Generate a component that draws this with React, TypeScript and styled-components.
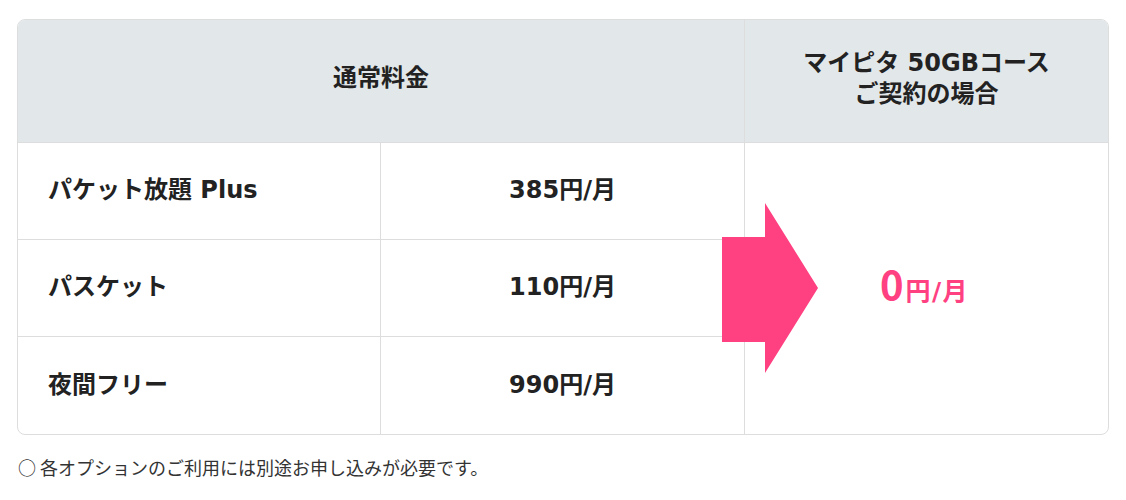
import React from "react";
import styled, { createGlobalStyle } from "styled-components";

const Global = createGlobalStyle`
  body {
    margin: 0;
    background: #fff;
    font-family: "DejaVu Sans", "Noto Sans CJK JP", sans-serif;
    color: #222;
  }
`;

const Page = styled.div`
  padding: 19px 17px 0 17px;
`;

const TableWrap = styled.div`
  position: relative;
`;

const Table = styled.div`
  display: grid;
  grid-template-columns: 363px 364px 1fr;
  grid-template-rows: 123px repeat(3, 97px);
  border: 1px solid #dddddd;
  border-radius: 8px;
  overflow: hidden;
  width: 1090px;
`;

const HeadCell = styled.div<{ $span?: number; $last?: boolean }>`
  grid-column: span ${(p) => p.$span ?? 1};
  background: #e2e7e9;
  display: flex;
  align-items: center;
  justify-content: center;
  text-align: center;
  font-size: 24px;
  font-weight: 700;
  line-height: 31px;
  padding-bottom: 5px;
  border-bottom: 1px solid #dddddd;
  border-right: ${(p) => (p.$last ? "none" : "1px solid #dddddd")};
`;

const Cell = styled.div<{ $align?: "left" | "center"; $bottom?: boolean; $col: number }>`
  grid-column: ${(p) => p.$col};
  display: flex;
  align-items: center;
  justify-content: ${(p) => (p.$align === "left" ? "flex-start" : "center")};
  padding-left: ${(p) => (p.$align === "left" ? "30px" : "0")};
  padding-bottom: 1px;
  font-size: 24px;
  font-weight: 700;
  line-height: 31px;
  border-right: 1px solid #dddddd;
  border-bottom: ${(p) => (p.$bottom ? "none" : "1px solid #dddddd")};
`;

const ResultCell = styled.div`
  grid-column: 3;
  grid-row: 2 / span 3;
  display: flex;
  align-items: baseline;
  justify-content: center;
  align-content: center;
  flex-wrap: wrap;
  color: #ff4081;
  font-weight: 700;
  padding-bottom: 10px;
  padding-right: 4px;
`;

const Big = styled.span`
  font-family: "Noto Sans CJK JP", sans-serif;
  font-size: 40px;
  line-height: 1;
  margin-right: 2px;
`;

const Unit = styled.span`
  font-size: 25px;
  line-height: 1;
  letter-spacing: 1.5px;
`;

const Arrow = styled.svg`
  position: absolute;
  left: 705px;
  top: 184px;
`;

const Note = styled.p`
  margin: 19px 0 0 1px;
  font-family: "Noto Sans CJK JP", sans-serif;
  font-size: 18px;
  font-weight: 400;
  color: #333;
  line-height: 26px;
`;

const rows = [
  { name: "パケット放題 Plus", price: "385円/月" },
  { name: "パスケット", price: "110円/月" },
  { name: "夜間フリー", price: "990円/月" },
];

export default function App() {
  return (
    <Page>
      <Global />
      <TableWrap>
        <Table>
          <HeadCell $span={2}>通常料金</HeadCell>
          <HeadCell $last>
            マイピタ 50GBコース
            <br />
            ご契約の場合
          </HeadCell>
          {rows.map((r, i) => (
            <React.Fragment key={r.name}>
              <Cell $col={1} $align="left" $bottom={i === rows.length - 1}>
                {r.name}
              </Cell>
              <Cell $col={2} $bottom={i === rows.length - 1}>
                {r.price}
              </Cell>
            </React.Fragment>
          ))}
          <ResultCell>
            <Big>0</Big>
            <Unit>円/月</Unit>
          </ResultCell>
        </Table>
        <Arrow width="96" height="170" viewBox="0 0 96 170">
          <polygon points="0,34 43,34 43,0 96,85 43,170 43,139 0,139" fill="#ff4081" />
        </Arrow>
      </TableWrap>
      <Note>○ 各オプションのご利用には別途お申し込みが必要です。</Note>
    </Page>
  );
}
